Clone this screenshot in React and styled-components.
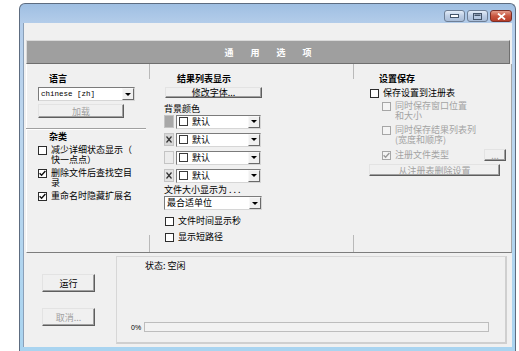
import React from "react";
import styled, { createGlobalStyle } from "styled-components";

const GlobalStyle = createGlobalStyle`
  body {
    margin: 0;
    background: #ffffff;
    font-family: "Noto Sans CJK SC", "Noto Sans", sans-serif;
  }
`;

const colorIcons = [
  { fill: "#a8a8a8", x: false },
  { fill: "#d8d8d8", x: true },
  { fill: "#ececec", x: false },
  { fill: "#e4e4e4", x: true },
];

const Check = ({ checked, disabled }) => (
  <Box $disabled={disabled}>
    {checked && (
      <svg width="7" height="7" viewBox="0 0 7 7">
        <path
          d="M0.6 3.2 L2.6 5.3 L6.4 1"
          stroke={disabled ? "#9a9a9a" : "#111"}
          strokeWidth="1.4"
          fill="none"
        />
      </svg>
    )}
  </Box>
);

const Combo = ({ text, swatch, width, mono }) => (
  <ComboBox $width={width}>
    <ComboValue $mono={mono}>
      {swatch && <Swatch />}
      {text}
    </ComboValue>
    <ComboArrow>
      <Tri />
    </ComboArrow>
  </ComboBox>
);

const ColorIcon = ({ fill, x }) => (
  <svg width="10" height="13" viewBox="0 0 10 13">
    <rect x="0.5" y="0.5" width="9" height="12" fill={fill} stroke="#c4c4c4" />
    {x && (
      <path d="M2.5 3.5 L7.5 9.5 M7.5 3.5 L2.5 9.5" stroke="#333" strokeWidth="1.2" />
    )}
  </svg>
);

const App = () => {
  return (
    <>
      <GlobalStyle />
      <Window>
        <TitleBar>
          <CapButton>
            <svg width="9" height="4" viewBox="0 0 9 4">
              <rect x="0.5" y="0.5" width="8" height="3" fill="#fff" stroke="#44556a" />
            </svg>
          </CapButton>
          <CapButton>
            <svg width="9" height="7" viewBox="0 0 9 7">
              <rect x="0.5" y="0.5" width="8" height="6" fill="none" stroke="#44556a" />
              <rect x="1.5" y="1.5" width="6" height="1.5" fill="#44556a" />
            </svg>
          </CapButton>
          <CapButton $close>
            <svg width="9" height="7" viewBox="0 0 9 7">
              <path d="M1 0.5 L8 6.5 M8 0.5 L1 6.5" stroke="#fff" strokeWidth="1.8" />
            </svg>
          </CapButton>
        </TitleBar>
        <Client>
          <TopStrip />
          <Header>通用选项</Header>
          <Content>
            <Column $pad={0}>
              <Title $indent={22}>语言</Title>
              <Indent $x={11} $y={3}>
                <Combo text="chinese [zh]" width={97} mono />
              </Indent>
              <Indent $x={11} $y={3}>
                <Button $w={86} $h={14} disabled>加载</Button>
              </Indent>
              <Rule />
              <Title $indent={22} $y={3}>杂类</Title>
              <CheckList $x={11} $y={3} $gap={3}>
                <CheckRow>
                  <Check />
                  <Label>减少详细状态显示（<br />快一点点）</Label>
                </CheckRow>
                <CheckRow>
                  <Check checked />
                  <Label>删除文件后查找空目<br />录</Label>
                </CheckRow>
                <CheckRow>
                  <Check checked />
                  <Label>重命名时隐藏扩展名</Label>
                </CheckRow>
              </CheckList>
            </Column>
            <Column $pad={14}>
              <Title $indent={13}>结果列表显示</Title>
              <Indent $x={1} $y={3}>
                <Button $w={97} $h={11}>修改字体...</Button>
              </Indent>
              <Label $y={6}>背景颜色</Label>
              <ColorList>
                {colorIcons.map((c, i) => (
                  <ColorRow key={i}>
                    <ColorIcon fill={c.fill} x={c.x} />
                    <Combo text="默认" swatch width={85} />
                  </ColorRow>
                ))}
              </ColorList>
              <Label $y={2}>文件大小显示为 . . .</Label>
              <Indent $x={0} $y={1}>
                <Combo text="最合适单位" width={98} />
              </Indent>
              <CheckList $x={1} $y={6} $gap={6}>
                <CheckRow>
                  <Check />
                  <Label>文件时间显示秒</Label>
                </CheckRow>
                <CheckRow>
                  <Check />
                  <Label>显示短路径</Label>
                </CheckRow>
              </CheckList>
            </Column>
            <Column $pad={15}>
              <Title $indent={10}>设置保存</Title>
              <CheckList $x={1} $y={4} $gap={3}>
                <CheckRow>
                  <Check />
                  <Label>保存设置到注册表</Label>
                </CheckRow>
                <SubList>
                  <CheckRow>
                    <Check disabled />
                    <Label $disabled>同时保存窗口位置<br />和大小</Label>
                  </CheckRow>
                  <CheckRow>
                    <Check disabled />
                    <Label $disabled>同时保存结果列表列<br />(宽度和顺序)</Label>
                  </CheckRow>
                  <TypeRow>
                    <CheckRow>
                      <Check checked disabled />
                      <Label $disabled>注册文件类型</Label>
                    </CheckRow>
                    <Button $w={22} $h={12} disabled>...</Button>
                  </TypeRow>
                </SubList>
              </CheckList>
              <Indent $x={0} $y={3}>
                <Button $w={131} $h={12} disabled>从注册表删除设置</Button>
              </Indent>
            </Column>
          </Content>
          <Bottom>
            <Actions>
              <Button $w={53} $h={18}>运行</Button>
              <Button $w={53} $h={18} disabled>取消...</Button>
            </Actions>
            <Group>
              <Status>状态:&nbsp;空闲</Status>
              <ProgressRow>
                <Percent>0%</Percent>
                <Bar />
              </ProgressRow>
            </Group>
          </Bottom>
        </Client>
      </Window>
    </>
  );
};

const Window = styled.div`
  margin: 3px 0 0 19px;
  width: 497px;
  height: 348px;
  box-sizing: border-box;
  border: 1px solid #5d6c80;
  border-bottom: none;
  border-radius: 6px 6px 0 0;
  background: linear-gradient(to bottom, #9fbfe2 0px, #b4cdea 20px, #bcd6ee 120px, #a9d4f0 100%);
  padding: 0 3px 4px 3px;
  display: flex;
  flex-direction: column;
`;

const TitleBar = styled.div`
  height: 19px;
  display: flex;
  justify-content: flex-end;
  align-items: flex-start;
  padding-top: 6px;
  box-sizing: border-box;
  gap: 2px;
`;

const CapButton = styled.div`
  width: ${(p) => (p.$close ? 22 : 21)}px;
  height: 12px;
  box-sizing: border-box;
  border: 1px solid ${(p) => (p.$close ? "#7a2f27" : "#6e7f96")};
  border-radius: 3px;
  background: ${(p) =>
    p.$close
      ? "linear-gradient(#e39a88, #c8553f 50%, #b73d29)"
      : "linear-gradient(#e4edf8, #bccde4 50%, #a9bdd8)"};
  display: flex;
  align-items: center;
  justify-content: center;
`;

const Client = styled.div`
  flex: 1;
  background: #f0f0f0;
  display: flex;
  flex-direction: column;
  border-left: 1px solid #8ba0b8;
`;

const TopStrip = styled.div`
  height: 17px;
`;

const Header = styled.div`
  height: 24px;
  margin: 0 2px 0 2px;
  box-sizing: border-box;
  background: #9f9f9f;
  border: 1px solid #6f6f6f;
  border-top-color: #d9d9d9;
  border-left-color: #d9d9d9;
  color: #ffffff;
  font-size: 9px;
  font-weight: 700;
  letter-spacing: 17px;
  padding-left: 17px;
  display: flex;
  align-items: center;
  justify-content: center;
`;

const Content = styled.div`
  height: 188px;
  margin: 0 0 0 2px;
  display: grid;
  grid-template-columns: 122px 204px 1fr;
  border-left: 1px solid #ffffff;
  border-right: 1px solid #a6a6a6;
  border-bottom: 1px solid #7d7d7d;
`;

const Column = styled.div`
  display: flex;
  flex-direction: column;
  align-items: flex-start;
  padding: 10px 0 0 ${(p) => p.$pad}px;
  & + & {
    border-left: 1px solid;
    border-image: linear-gradient(
        to bottom,
        #b9b9b9 0 16px,
        transparent 16px calc(100% - 18px),
        #b9b9b9 calc(100% - 18px)
      )
      1;
  }
`;

const Title = styled.div`
  margin: ${(p) => p.$y || 0}px 0 0 ${(p) => p.$indent}px;
  font-size: 9px;
  line-height: 10px;
  font-weight: 700;
  color: #000;
`;

const Label = styled.div`
  margin-top: ${(p) => p.$y || 0}px;
  font-size: 9px;
  line-height: 10px;
  color: ${(p) => (p.$disabled ? "#a3a3a3" : "#000")};
  white-space: nowrap;
`;

const Indent = styled.div`
  display: flex;
  margin: ${(p) => p.$y}px 0 0 ${(p) => p.$x}px;
`;

const Button = styled.button`
  display: flex;
  align-items: center;
  justify-content: center;
  width: ${(p) => p.$w}px;
  height: ${(p) => p.$h}px;
  padding: 0;
  box-sizing: border-box;
  background: #f0f0f0;
  border: 1px solid;
  border-color: #e3e3e3 #5e5e5e #5e5e5e #e3e3e3;
  box-shadow: inset -1px -1px 0 #a0a0a0;
  font-family: "Noto Sans CJK SC", sans-serif;
  font-size: 9px;
  line-height: 9px;
  color: #000;
  &:disabled {
    color: #a0a0a0;
  }
`;

const ComboBox = styled.div`
  width: ${(p) => p.$width}px;
  height: 14px;
  box-sizing: border-box;
  border: 1px solid #7b7b7b;
  border-right-color: #d6d6d6;
  border-bottom-color: #d6d6d6;
  background: #ffffff;
  display: flex;
`;

const ComboValue = styled.div`
  flex: 1;
  display: flex;
  align-items: center;
  gap: 4px;
  padding-left: 2px;
  font-family: ${(p) => (p.$mono ? '"Liberation Mono", monospace' : "inherit")};
  font-size: ${(p) => (p.$mono ? 7.5 : 9)}px;
  line-height: 10px;
  color: #000;
  white-space: nowrap;
  overflow: hidden;
`;

const Swatch = styled.span`
  width: 9px;
  height: 9px;
  box-sizing: border-box;
  border: 1px solid #3a3a3a;
  background: #fff;
  flex: none;
`;

const ComboArrow = styled.div`
  width: 12px;
  box-sizing: border-box;
  background: #f0f0f0;
  border: 1px solid;
  border-color: #f8f8f8 #6a6a6a #6a6a6a #f8f8f8;
  display: flex;
  align-items: center;
  justify-content: center;
`;

const Tri = styled.span`
  width: 0;
  height: 0;
  border-left: 3px solid transparent;
  border-right: 3px solid transparent;
  border-top: 3px solid #000;
`;

const Rule = styled.div`
  margin: 10px 0 0 -1px;
  width: 120px;
  height: 1px;
  background: #a0a0a0;
  box-shadow: 0 1px 0 #ffffff;
`;

const CheckList = styled.div`
  margin: ${(p) => p.$y}px 0 0 ${(p) => p.$x}px;
  display: flex;
  flex-direction: column;
  gap: ${(p) => p.$gap}px;
`;

const SubList = styled.div`
  margin-left: 12px;
  display: flex;
  flex-direction: column;
  gap: 4px;
`;

const CheckRow = styled.div`
  display: flex;
  align-items: flex-start;
  gap: 4px;
`;

const TypeRow = styled.div`
  display: flex;
  align-items: center;
  gap: 35px;
`;

const Box = styled.span`
  flex: none;
  margin-top: 0.5px;
  width: 9px;
  height: 9px;
  box-sizing: border-box;
  border: 1px solid ${(p) => (p.$disabled ? "#a6a6a6" : "#2c2c2c")};
  background: ${(p) => (p.$disabled ? "#f4f4f4" : "#ffffff")};
  display: flex;
  align-items: center;
  justify-content: center;
`;

const ColorList = styled.div`
  margin-top: 0;
  display: flex;
  flex-direction: column;
  gap: 3px;
`;

const ColorRow = styled.div`
  display: flex;
  align-items: center;
  gap: 2px;
  height: 15px;
`;

const Bottom = styled.div`
  flex: 1;
  display: flex;
  padding: 3px 5px 3px 0;
`;

const Actions = styled.div`
  width: 92px;
  box-sizing: border-box;
  padding: 18px 0 0 18px;
  display: flex;
  flex-direction: column;
  gap: 16px;
`;

const Group = styled.div`
  flex: 1;
  box-sizing: border-box;
  border: 1px solid #d7d7d7;
  border-right: 2px solid #cfcfcf;
  border-bottom: 2px solid #cfcfcf;
  display: flex;
  flex-direction: column;
  justify-content: space-between;
  padding: 4px 16px 10px 14px;
`;

const Status = styled.div`
  margin-left: 14px;
  font-size: 9px;
  line-height: 10px;
  color: #000;
`;

const ProgressRow = styled.div`
  display: flex;
  align-items: center;
  gap: 4px;
`;

const Percent = styled.span`
  font-family: "Liberation Sans", sans-serif;
  font-size: 7px;
  color: #000;
  width: 9px;
`;

const Bar = styled.div`
  flex: 1;
  height: 10px;
  box-sizing: border-box;
  border: 1px solid #bdbdbd;
  background: #f2f2f2;
`;

export default App;
